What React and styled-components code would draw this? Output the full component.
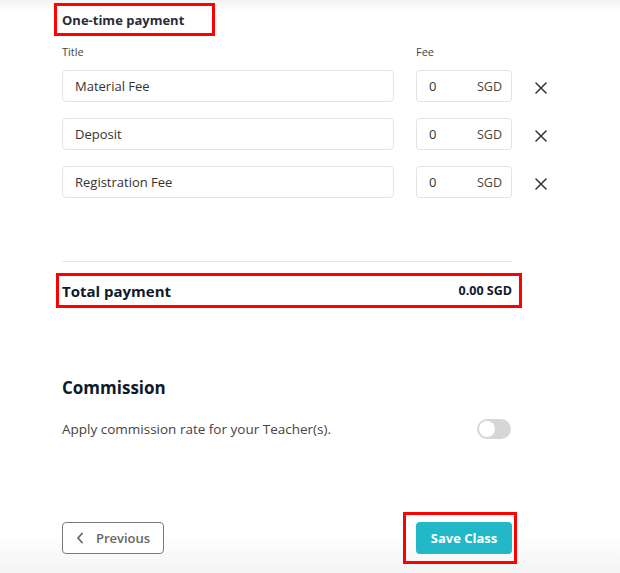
import React from "react";
import styled, { createGlobalStyle } from "styled-components";

const Global = createGlobalStyle`
  html, body { margin: 0; padding: 0; background: #fff; }
  body { font-family: "Open Sans", "Noto Sans", sans-serif; color: #333; }
`;

const Page = styled.div`
  width: 620px;
  height: 573px;
  box-sizing: border-box;
  overflow: hidden;
  background: linear-gradient(to bottom, #f3f3f4 0px, #ffffff 12px, #ffffff 535px, #f4f4f6 573px);
  padding: 3px 0 0 62px;
`;

const Content = styled.div`
  width: 450px;
  display: flex;
  flex-direction: column;
`;

const Highlight = styled.div`
  border: 3px solid #ff0000;
  box-sizing: border-box;
`;

const SectionHead = styled(Highlight)`
  align-self: flex-start;
  margin-left: -8px;
  width: 161px;
  height: 33px;
  padding-left: 5px;
  display: flex;
  align-items: center;
  font-size: 13px;
  font-weight: 700;
  color: #2b2b36;
`;

const Grid = styled.div`
  display: grid;
  grid-template-columns: 332px 96px 46px;
  column-gap: 22px;
  row-gap: 16px;
  margin-top: 9px;
  margin-right: -46px;
`;

const Label = styled.div`
  font-size: 11px;
  color: #444;
  line-height: 14px;
  margin-bottom: -5px;
`;

const InputBox = styled.div`
  height: 32px;
  box-sizing: border-box;
  border: 1px solid #e3e3e3;
  border-radius: 4px;
  display: flex;
  align-items: center;
  justify-content: space-between;
  padding: 0 9px 0 12px;
  font-size: 13px;
  color: #333;
`;

const Unit = styled.span`
  color: #444;
  font-size: 12.5px;
`;

const RemoveBtn = styled.button`
  border: 0;
  background: none;
  padding: 0;
  margin-left: -1px;
  width: 16px;
  height: 32px;
  display: flex;
  align-items: center;
  justify-content: center;
  padding-top: 4px;
  cursor: pointer;
`;

const Divider = styled.hr`
  margin: 63px 0 0 0;
  border: 0;
  border-top: 1px solid #e6e6e6;
  width: 450px;
`;

const TotalBox = styled(Highlight)`
  margin: 11px 0 0 -6px;
  width: 466px;
  height: 35px;
  padding: 0 7px 0 3px;
  display: flex;
  align-items: center;
  justify-content: space-between;
  color: #0e1a2b;
  font-weight: 700;
`;

const TotalLabel = styled.span`
  font-size: 15px;
`;

const TotalValue = styled.span`
  font-size: 12.5px;
`;

const H2 = styled.h2`
  margin: 70px 0 0 0;
  font-size: 17px;
  font-weight: 700;
  color: #0e1a2b;
  line-height: 20px;
`;

const ToggleRow = styled.div`
  margin-top: 21px;
  display: flex;
  align-items: center;
  justify-content: space-between;
  font-size: 13.5px;
  color: #444;
`;

const Switch = styled.div`
  width: 34px;
  height: 20px;
  border-radius: 10px;
  background: #d6d6d6;
  display: flex;
  align-items: center;
  padding: 2px;
  box-sizing: border-box;
  margin-right: 1px;
`;

const Knob = styled.div`
  width: 16px;
  height: 16px;
  border-radius: 50%;
  background: #fff;
`;

const Footer = styled.div`
  margin-top: 73px;
  display: flex;
  justify-content: space-between;
  align-items: center;
`;

const PrevButton = styled.button`
  width: 102px;
  height: 32px;
  box-sizing: border-box;
  border: 1px solid #7a7a7a;
  border-radius: 4px;
  background: #fff;
  display: flex;
  align-items: center;
  justify-content: center;
  gap: 12px;
  font-family: inherit;
  font-size: 13px;
  font-weight: 600;
  color: #666;
  padding: 0;
`;

const SaveWrap = styled(Highlight)`
  width: 114px;
  height: 52px;
  margin-right: -5px;
  display: flex;
  align-items: center;
  justify-content: flex-end;
  padding-right: 2px;
  background: transparent;
`;

const SaveButton = styled.button`
  width: 96px;
  height: 32px;
  border: 0;
  border-radius: 4px;
  background: #22b8c8;
  color: #fff;
  font-family: inherit;
  font-size: 13px;
  font-weight: 700;
  padding: 0;
`;

const XIcon = () => (
  <svg width="12" height="12" viewBox="0 0 12 12">
    <path d="M1 1L11 11M11 1L1 11" stroke="#333" strokeWidth="1.5" strokeLinecap="round" />
  </svg>
);

const Chevron = () => (
  <svg width="8" height="12" viewBox="0 0 8 12">
    <path d="M6 1.5L2 6l4 4.5" fill="none" stroke="#666" strokeWidth="1.8" strokeLinecap="round" strokeLinejoin="round" />
  </svg>
);

const fees = ["Material Fee", "Deposit", "Registration Fee"];

export default function App() {
  return (
    <>
      <Global />
      <Page>
        <Content>
          <SectionHead>One-time payment</SectionHead>
          <Grid>
            <Label>Title</Label>
            <Label>Fee</Label>
            <span />
            {fees.map((f) => (
              <React.Fragment key={f}>
                <InputBox>{f}</InputBox>
                <InputBox>
                  <span>0</span>
                  <Unit>SGD</Unit>
                </InputBox>
                <RemoveBtn aria-label="remove">
                  <XIcon />
                </RemoveBtn>
              </React.Fragment>
            ))}
          </Grid>
          <Divider />
          <TotalBox>
            <TotalLabel>Total payment</TotalLabel>
            <TotalValue>0.00 SGD</TotalValue>
          </TotalBox>
          <H2>Commission</H2>
          <ToggleRow>
            <span>Apply commission rate for your Teacher(s).</span>
            <Switch>
              <Knob />
            </Switch>
          </ToggleRow>
          <Footer>
            <PrevButton>
              <Chevron />
              Previous
            </PrevButton>
            <SaveWrap>
              <SaveButton>Save Class</SaveButton>
            </SaveWrap>
          </Footer>
        </Content>
      </Page>
    </>
  );
}
